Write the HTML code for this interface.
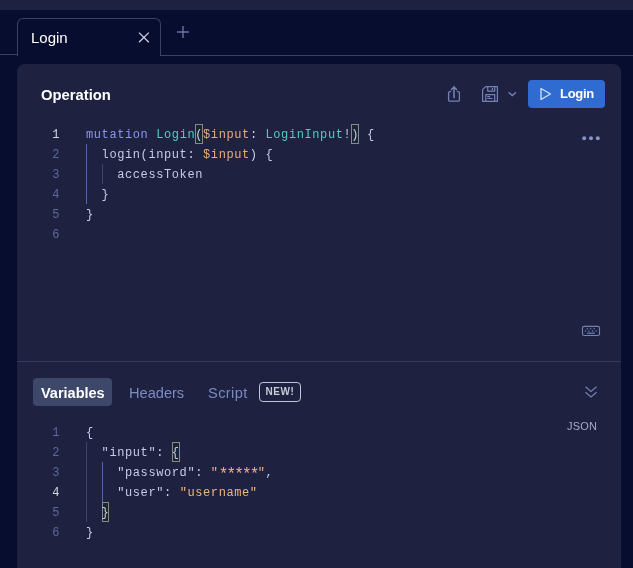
<!DOCTYPE html>
<html><head><meta charset="utf-8">
<style>
*{box-sizing:border-box;margin:0;padding:0}
html,body{width:633px;height:568px;overflow:hidden;background:#070d2e;font-family:"Liberation Sans",sans-serif;position:relative}
.abs{position:absolute;will-change:transform}
#topbar{left:0;top:0;width:633px;height:10px;background:#1e2240}
#tabline{left:0;top:54px;width:18px;height:1px;background:#3a4068}#tabline2{left:160px;top:55px;width:473px;height:1px;background:#3a4068}
#tab{left:17px;top:18px;width:144px;height:38px;border:1px solid #3a4068;border-bottom:none;border-radius:6px 6px 0 0;background:#070d2e}
#tabtxt{left:31px;top:29px;font-size:15px;color:#fff;line-height:18px}
#card{left:17px;top:64px;width:604px;height:520px;border-radius:8px;background:#1e2240}
#optitle{left:41px;top:86px;font-size:14.8px;font-weight:bold;color:#fff;line-height:18px}
#runbtn{left:528px;top:80px;width:77px;height:28px;border-radius:4px;background:#2f6bd0}
#runtxt{left:560px;top:86px;font-size:13px;font-weight:bold;color:#fff;line-height:16px;letter-spacing:-0.3px}
.code{font-family:"Liberation Mono",monospace;font-size:12px;letter-spacing:0.6px;line-height:20px;white-space:pre}
.ln{color:#5c6a9a;text-align:right;width:30px}
.ln.act{color:#d5d7e0}
.kw{color:#8c93ee}
.nm{color:#55cbc4}
.vr{color:#ebac7a}
.pn{color:#c6cbe6}
.fd{color:#c6cbe6}
.st{color:#efb282}
.guide{width:1px;background:#3b4372}.guide.act{background:#5468a8}
#divider{left:17px;top:361px;width:604px;height:1px;background:#343a5e}
#varpill{left:33px;top:378px;width:79px;height:28px;border-radius:4px;background:#3d4769}
.tabt{font-size:14.6px;line-height:18px;color:#7b8bc2}.tabt.sel{font-weight:bold;font-size:14.5px;color:#fff}
#newb{left:259px;top:382px;width:42px;height:20px;border:1.3px solid #c0c4d4;border-radius:4px;font-size:10px;font-weight:bold;color:#c8cad8;text-align:center;line-height:17px;letter-spacing:0.6px}
#json{left:567px;top:420px;font-family:"Liberation Sans",sans-serif;font-size:11px;color:#a4aac4;letter-spacing:0.2px;line-height:12px}
.brk{border:1px solid #8a8a84;background:#182536}
</style></head><body>
<div id="topbar" class="abs"></div>
<div id="tabline" class="abs"></div>
<div id="tabline2" class="abs"></div>
<div id="tab" class="abs"></div>
<div id="tabtxt" class="abs">Login</div>
<svg class="abs" style="left:138px;top:32px" width="12" height="11" viewBox="0 0 12 11"><path d="M1 0.6L10.8 10.2M10.8 0.6L1 10.2" stroke="#d0d4e8" stroke-width="1.25" fill="none"/></svg>
<svg class="abs" style="left:176px;top:25px" width="14" height="14" viewBox="0 0 14 14"><path d="M7 1V13M1 7H13" stroke="#6473a8" stroke-width="1.4" fill="none"/></svg>

<div id="card" class="abs"></div>
<div id="optitle" class="abs">Operation</div>

<!-- share icon -->
<svg class="abs" style="left:444px;top:82px" width="22" height="24" viewBox="0 0 22 24"><path d="M6.6 9.6H5.8Q4.6 9.6 4.6 10.8V18Q4.6 19.2 5.8 19.2H14.2Q15.4 19.2 15.4 18V10.8Q15.4 9.6 14.2 9.6H13.4" stroke="#7282b6" stroke-width="1.3" fill="none" stroke-linecap="round"/><path d="M10 5V15.6" stroke="#7282b6" stroke-width="1.6" fill="none" stroke-linecap="round"/><path d="M7.5 7.6L10 5L12.5 7.6" stroke="#7282b6" stroke-width="1.5" fill="none" stroke-linecap="round" stroke-linejoin="round"/></svg>
<!-- save icon -->
<svg class="abs" style="left:478px;top:82px" width="24" height="24" viewBox="0 0 24 24"><g stroke="#7282b6" stroke-width="1.2" fill="none" stroke-linejoin="round"><path d="M7.6 4.6H19.4V19.4H4.6V7.6Z"/><path d="M9.7 4.6V9.1H16.7V4.6"/><path d="M7.8 19.4V12.6H16.7V19.4"/><path d="M9.3 14.6H12.2M9.3 16.5H14.6"/></g><path d="M14.4 6V8.2" stroke="#7282b6" stroke-width="1.3"/></svg>
<svg class="abs" style="left:506px;top:90px" width="12" height="8" viewBox="0 0 12 8"><path d="M2.6 2.3L6.3 5.6L10 2.3" stroke="#7282b6" stroke-width="1.4" fill="none"/></svg>

<div id="runbtn" class="abs"></div>
<svg class="abs" style="left:539px;top:87px" width="13" height="14" viewBox="0 0 13 14"><path d="M2 1.5V12.5L11.5 7Z" stroke="#d8e2f6" stroke-width="1.3" fill="none" stroke-linejoin="round"/></svg>
<div id="runtxt" class="abs">Login</div>

<!-- operation editor -->
<div class="abs code ln act" style="left:30px;top:125px">1</div>
<div class="abs code ln" style="left:30px;top:145px">2</div>
<div class="abs code ln" style="left:30px;top:165px">3</div>
<div class="abs code ln" style="left:30px;top:185px">4</div>
<div class="abs code ln" style="left:30px;top:205px">5</div>
<div class="abs code ln" style="left:30px;top:225px">6</div>
<div class="abs guide act" style="left:86px;top:144px;height:60px"></div>
<div class="abs guide" style="left:102px;top:164px;height:20px"></div>
<div class="abs brk" style="left:195px;top:124px;width:8px;height:20px"></div>
<div class="abs brk" style="left:351px;top:124px;width:8px;height:20px"></div>
<div class="abs code" style="left:86px;top:125px"><span class="kw">mutation</span> <span class="nm">Login</span><span class="pn">(</span><span class="vr">$input</span><span class="pn">: </span><span class="nm">LoginInput</span><span class="pn">!) {</span></div>
<div class="abs code" style="left:86px;top:145px"><span class="fd">  login(input: </span><span class="vr">$input</span><span class="pn">) {</span></div>
<div class="abs code" style="left:86px;top:165px"><span class="fd">    accessToken</span></div>
<div class="abs code" style="left:86px;top:185px"><span class="pn">  }</span></div>
<div class="abs code" style="left:86px;top:205px"><span class="pn">}</span></div>

<svg class="abs" style="left:582px;top:136px" width="18" height="5" viewBox="0 0 18 5"><circle cx="2.2" cy="2.2" r="2" fill="#8494c6"/><circle cx="9" cy="2.2" r="2" fill="#8494c6"/><circle cx="15.8" cy="2.2" r="2" fill="#8494c6"/></svg>
<svg class="abs" style="left:581px;top:325px" width="20" height="12" viewBox="0 0 20 12"><rect x="1.5" y="1.4" width="17" height="9.1" rx="1.6" stroke="#7282b6" stroke-width="1.1" fill="none"/><g fill="#7282b6"><rect x="5.8" y="3.1" width="1.2" height="1.2"/><rect x="9.1" y="3.1" width="1.2" height="1.2"/><rect x="12.6" y="3.1" width="1.2" height="1.2"/><rect x="3.9" y="5.4" width="1.2" height="1.2"/><rect x="7.4" y="5.4" width="1.2" height="1.2"/><rect x="11" y="5.4" width="1.2" height="1.2"/><rect x="14.5" y="5.4" width="1.2" height="1.2"/><rect x="6.1" y="7.6" width="7.6" height="1.2"/></g></svg>

<div id="divider" class="abs"></div>

<div id="varpill" class="abs"></div>
<div class="abs tabt sel" style="left:41px;top:384px">Variables</div>
<div class="abs tabt" style="left:129px;top:384px">Headers</div>
<div class="abs tabt" style="left:208px;top:384px;letter-spacing:0.4px">Script</div>
<div id="newb" class="abs">NEW!</div>
<svg class="abs" style="left:584px;top:385px" width="14" height="14" viewBox="0 0 14 14"><path d="M1.5 1.7L7 6.5L12.5 1.7M1.5 7.2L7 12L12.5 7.2" stroke="#7282b6" stroke-width="1.15" fill="none"/></svg>
<div id="json" class="abs">JSON</div>

<!-- variables editor -->
<div class="abs code ln" style="left:30px;top:423px">1</div>
<div class="abs code ln" style="left:30px;top:443px">2</div>
<div class="abs code ln" style="left:30px;top:463px">3</div>
<div class="abs code ln act" style="left:30px;top:483px">4</div>
<div class="abs code ln" style="left:30px;top:503px">5</div>
<div class="abs code ln" style="left:30px;top:523px">6</div>
<div class="abs guide" style="left:86px;top:442px;height:80px"></div>
<div class="abs guide act" style="left:102px;top:462px;height:40px"></div>
<div class="abs brk" style="left:172px;top:442px;width:8px;height:20px"></div>
<div class="abs brk" style="left:102px;top:502px;width:7px;height:20px"></div>
<div class="abs code" style="left:86px;top:423px"><span class="pn">{</span></div>
<div class="abs code" style="left:86px;top:443px"><span class="fd">  "input": {</span></div>
<div class="abs code" style="left:86px;top:463px"><span class="fd">    "password": </span><span class="st">"<span style="position:relative;top:3px;font-size:16px;letter-spacing:-1.8px;line-height:0">*****</span>"</span><span class="pn">,</span></div>
<div class="abs code" style="left:86px;top:483px"><span class="fd">    "user": </span><span class="st">"username"</span></div>
<div class="abs code" style="left:86px;top:503px"><span class="pn">  }</span></div>
<div class="abs code" style="left:86px;top:523px"><span class="pn">}</span></div>
</body></html>
